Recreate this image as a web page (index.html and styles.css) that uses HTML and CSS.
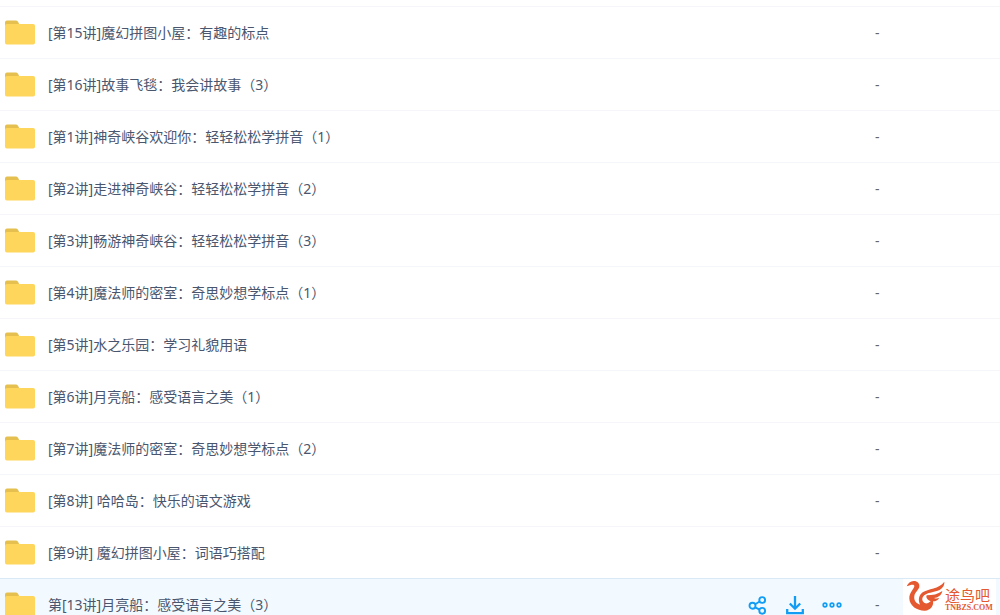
FILE: index.html
```
<!DOCTYPE html>
<html lang="zh-CN">
<head>
<meta charset="utf-8">
<title>文件列表</title>
<link rel="stylesheet" href="styles.css">
</head>
<body>
<svg class="symbols" aria-hidden="true">
  <symbol id="folder" viewBox="0 0 30 25">
    <path d="M0 2.5A2 2 0 0 1 2 .5H11.2Q12.5 .5 13.2 2L14.5 5V10H0Z" fill="#e5c04f"/>
    <rect y="4" width="30" height="20.5" rx="1.8" fill="#ffd65c"/>
  </symbol>
</svg>
<main class="files">
  <table class="list">
    <tbody>
      <tr class="row"><td class="name"><div class="entry"><svg class="folder"><use href="#folder"/></svg><span>[第15讲]魔幻拼图小屋：有趣的标点</span></div></td><td class="actions"></td><td class="size">-</td></tr>
      <tr class="row"><td class="name"><div class="entry"><svg class="folder"><use href="#folder"/></svg><span>[第16讲]故事飞毯：我会讲故事（3）</span></div></td><td class="actions"></td><td class="size">-</td></tr>
      <tr class="row"><td class="name"><div class="entry"><svg class="folder"><use href="#folder"/></svg><span>[第1讲]神奇峡谷欢迎你：轻轻松松学拼音（1）</span></div></td><td class="actions"></td><td class="size">-</td></tr>
      <tr class="row"><td class="name"><div class="entry"><svg class="folder"><use href="#folder"/></svg><span>[第2讲]走进神奇峡谷：轻轻松松学拼音（2）</span></div></td><td class="actions"></td><td class="size">-</td></tr>
      <tr class="row"><td class="name"><div class="entry"><svg class="folder"><use href="#folder"/></svg><span>[第3讲]畅游神奇峡谷：轻轻松松学拼音（3）</span></div></td><td class="actions"></td><td class="size">-</td></tr>
      <tr class="row"><td class="name"><div class="entry"><svg class="folder"><use href="#folder"/></svg><span>[第4讲]魔法师的密室：奇思妙想学标点（1）</span></div></td><td class="actions"></td><td class="size">-</td></tr>
      <tr class="row"><td class="name"><div class="entry"><svg class="folder"><use href="#folder"/></svg><span>[第5讲]水之乐园：学习礼貌用语</span></div></td><td class="actions"></td><td class="size">-</td></tr>
      <tr class="row"><td class="name"><div class="entry"><svg class="folder"><use href="#folder"/></svg><span>[第6讲]月亮船：感受语言之美（1）</span></div></td><td class="actions"></td><td class="size">-</td></tr>
      <tr class="row"><td class="name"><div class="entry"><svg class="folder"><use href="#folder"/></svg><span>[第7讲]魔法师的密室：奇思妙想学标点（2）</span></div></td><td class="actions"></td><td class="size">-</td></tr>
      <tr class="row"><td class="name"><div class="entry"><svg class="folder"><use href="#folder"/></svg><span>[第8讲] 哈哈岛：快乐的语文游戏</span></div></td><td class="actions"></td><td class="size">-</td></tr>
      <tr class="row"><td class="name"><div class="entry"><svg class="folder"><use href="#folder"/></svg><span>[第9讲] 魔幻拼图小屋：词语巧搭配</span></div></td><td class="actions"></td><td class="size">-</td></tr>
      <tr class="row row-active"><td class="name"><div class="entry"><svg class="folder"><use href="#folder"/></svg><span>第[13讲]月亮船：感受语言之美（3）</span></div></td>
        <td class="actions">
          <div class="tools">
            <button class="tool" type="button" aria-label="分享">
              <svg class="glyph" viewBox="0 0 20 20"><g fill="none" stroke="#129df5" stroke-width="1.9"><circle cx="4.5" cy="10.8" r="3"/><circle cx="14.2" cy="5" r="2.9"/><circle cx="14.2" cy="15.8" r="2.9"/><path d="M7.2 9.2 11.6 6.5M7.2 12.3 11.6 14.6"/></g></svg>
            </button>
            <button class="tool" type="button" aria-label="下载">
              <svg class="glyph" viewBox="0 0 20 20"><g fill="none" stroke="#129df5" stroke-width="2.3"><path d="M10 1V13.5M4.8 8.5 10 13.7 15.2 8.500M2.2 14V18.2H17.8V14"/></g></svg>
            </button>
            <button class="tool" type="button" aria-label="更多">
              <svg class="glyph" viewBox="0 0 20 20"><g fill="none" stroke="#129df5" stroke-width="1.7"><circle cx="3" cy="10" r="1.8"/><circle cx="10" cy="10" r="1.8"/><circle cx="17" cy="10" r="1.8"/></g></svg>
            </button>
          </div>
        </td><td class="size">-</td></tr>
    </tbody>
  </table>
</main>
<aside class="brand">
  <svg class="bird" viewBox="18 14 117 93" aria-hidden="true">
    <g fill="#e4592f">
      <path d="M20 33C24 24 31 17 41 17C53 17 60 25 58 35C56 44 45 50 43 62C41 75 48 84 60 88C54 74 56 60 68 51C84 39 117 42 133 19C134 34 124 43 107 48C93 52 77 54 70 63C64 71 67 80 76 84C86 86 91 77 98 73C104 88 93 105 74 106C51 106 29 91 28 70C27 53 41 43 43 33C44 26 34 27 20 33Z"/>
      <path d="M80 60C98 60 113 57 127 47C124 61 114 67 102 68C110 71 114 69 118 67C111 80 94 81 84 73C79 69 78 65 80 60Z"/>
    </g>
  </svg>
  <div class="brand-text"><span class="brand-name">途鸟吧</span><span class="brand-site">TNBZS.COM</span></div>
</aside>
</body>
</html>
```
FILE: styles.css
```
body {
  margin: 0;
  background: #fff;
  color: #4a566e;
  font: 14px/20px "Noto Sans", "Noto Sans CJK SC", sans-serif;
}

.symbols {
  position: absolute;
  width: 0;
  height: 0;
}

.files {
  box-sizing: border-box;
  height: 100vh;
  padding-top: 6px;
  overflow: hidden;
}

.list {
  width: 100%;
  border-collapse: separate;
  border-spacing: 0;
}

.row td {
  box-sizing: border-box;
  height: 52px;
  padding: 0;
  border-top: 1px solid #f4f6f9;
}

.row-active td {
  background: #f3faff;
  border-top-color: #d9eaf6;
}

.entry {
  display: flex;
  align-items: center;
  gap: 13px;
  padding-left: 5px;
  white-space: nowrap;
}

.folder {
  width: 30px;
  height: 25px;
}

.actions {
  width: 127px;
}

.tools {
  display: flex;
  gap: 17px;
}

.tool {
  display: flex;
  padding: 0;
  border: 0;
  background: none;
  cursor: pointer;
}

.glyph {
  width: 20px;
  height: 20px;
}

.row .size {
  width: 125px;
  color: #666;
}

.brand {
  position: fixed;
  right: 4px;
  bottom: 0;
  display: flex;
  box-sizing: border-box;
  width: 93px;
  height: 36px;
  padding: 1px 3px;
  background: #fff;
  color: #e4592f;
}

.bird {
  width: 39px;
  height: 31px;
}

.brand-text {
  display: flex;
  flex-direction: column;
  padding-top: 6px;
}

.brand-name {
  font: 15px/18px "Noto Sans CJK SC", sans-serif;
}

.brand-site {
  font: bold 8px/8px "Liberation Serif", serif;
}
```
